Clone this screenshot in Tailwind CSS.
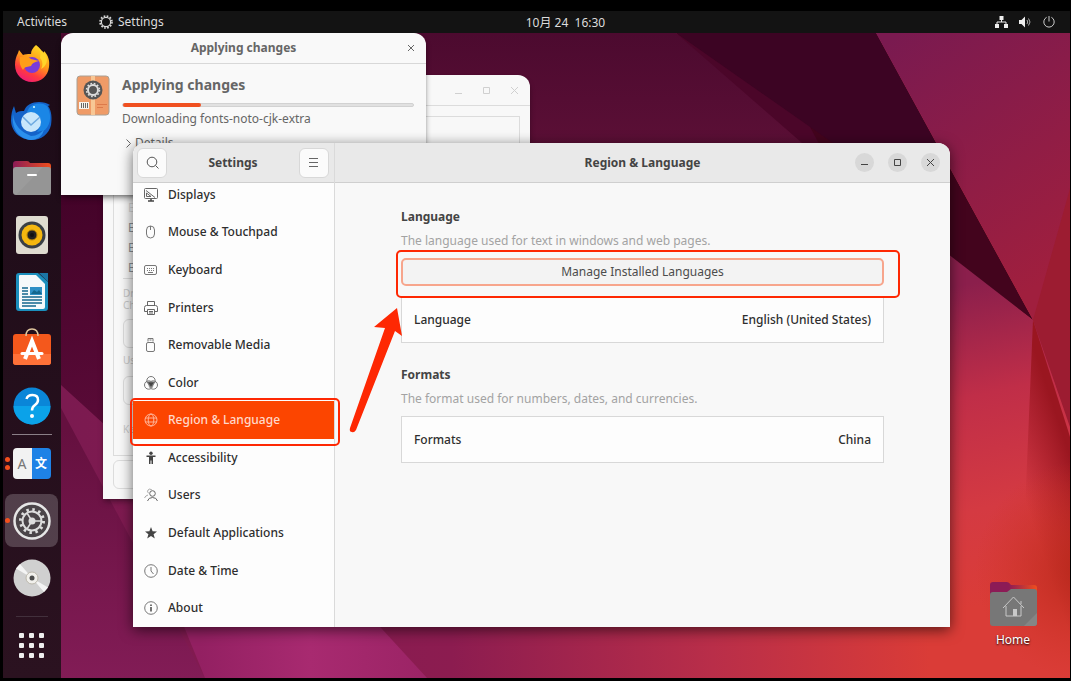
<!DOCTYPE html>
<html lang="en">
<head>
    <meta charset="UTF-8">
    <meta name="viewport" content="width=device-width, initial-scale=1.0">
    <title>Settings | Region &amp; Language</title>
    <script src="https://cdn.jsdelivr.net/npm/@tailwindcss/browser@4"></script>
</head>
<body class="bg-black font-['Noto_Sans','Noto_Sans_CJK_SC',sans-serif] text-xs">
<div class="min-h-screen flex flex-col pt-[11px] pl-[3px] pr-px pb-[3px]">

    <!-- Top bar -->
    <header class="h-[22px] flex items-center bg-[#131313] text-[#dcdcdc]">
        <nav class="w-[58px] shrink-0 flex items-center pl-[14px] whitespace-nowrap">
            <button type="button">Activities</button>
            <button type="button" class="ml-8 flex items-center gap-[5px]">
                <svg class="w-[14px] h-[14px]" viewBox="0 0 14 14" fill="none" stroke="#dcdcdc">
                    <circle cx="7" cy="7" r="4.6" stroke-width="1.2"/>
                    <circle cx="7" cy="7" r="6" stroke-width="1.6" stroke-dasharray="1.7 1.44"/>
                </svg>
                Settings
            </button>
        </nav>
        <div class="flex-1 grid grid-cols-[1fr_auto_1fr] items-center">
            <time class="col-start-2 pt-[2px] whitespace-pre">10月 24  16:30</time>
            <div class="flex justify-end items-center gap-[11px] pr-[15px]">
                <svg class="w-[13px] h-[12px]" viewBox="0 0 13 12" fill="#eee">
                    <path d="M4.5 0h4v4h-4zM0 8h4v4H0zM9 8h4v4H9z"/>
                    <path d="M6.500 4v2M2 8V6h9v2" fill="none" stroke="#eee"/>
                </svg>
                <svg class="w-[13px] h-[12px]" viewBox="0 0 13 12">
                    <path d="M0 4h2.500L6 .5v11L2.500 8H0z" fill="#eee"/>
                    <path d="M8 4q1.500 2 0 4M9.500 2.500q3 3.500 0 7" fill="none" stroke="#aaa"/>
                </svg>
                <svg class="w-[12px] h-[12px]" viewBox="0 0 12 12" fill="none" stroke="#ccc">
                    <path d="M3.600 1.300a5.200 5.200 0 1 0 4.800 0M6 0v5.500"/>
                </svg>
            </div>
        </div>
    </header>

    <div class="relative flex-1 flex overflow-hidden">
        <!-- Wallpaper -->
        <svg class="absolute inset-0 w-full h-full" viewBox="3 33 1067 645" preserveAspectRatio="none">
            <defs>
                <linearGradient id="base" gradientUnits="userSpaceOnUse" x1="61" y1="660" x2="930" y2="660">
                    <stop offset="0" stop-color="#7b1a50"/>
                    <stop offset=".45" stop-color="#8c1c50"/>
                    <stop offset=".75" stop-color="#b92e49"/>
                    <stop offset="1" stop-color="#da3c37"/>
                </linearGradient>
                <linearGradient id="top" x1="0" y1="0" x2="0" y2="1">
                    <stop offset="0" stop-color="#4c0a2f"/>
                    <stop offset=".7" stop-color="#5e1037"/>
                    <stop offset="1" stop-color="#6e1340"/>
                </linearGradient>
                <linearGradient id="left" gradientUnits="userSpaceOnUse" x1="61" y1="200" x2="110" y2="500">
                    <stop offset="0" stop-color="#440329"/>
                    <stop offset="1" stop-color="#610d3c"/>
                </linearGradient>
                <linearGradient id="strip" gradientUnits="userSpaceOnUse" x1="61" y1="430" x2="61" y2="678">
                    <stop offset="0" stop-color="#65103f"/>
                    <stop offset="1" stop-color="#821c56"/>
                </linearGradient>
                <linearGradient id="right" gradientUnits="userSpaceOnUse" x1="900" y1="33" x2="1060" y2="270">
                    <stop offset="0" stop-color="#7a1a50"/>
                    <stop offset="1" stop-color="#a01f3e"/>
                </linearGradient>
                <linearGradient id="low" gradientUnits="userSpaceOnUse" x1="940" y1="290" x2="1010" y2="600">
                    <stop offset="0" stop-color="#8b1f4c"/>
                    <stop offset=".35" stop-color="#c02e48"/>
                    <stop offset=".7" stop-color="#d43a42"/>
                    <stop offset="1" stop-color="#da3c37"/>
                </linearGradient>
                <linearGradient id="edge" gradientUnits="userSpaceOnUse" x1="1018" y1="480" x2="1072" y2="462">
                    <stop offset="0" stop-color="#a51b22" stop-opacity="0"/>
                    <stop offset="1" stop-color="#9a1620"/>
                </linearGradient>
                <radialGradient id="corner" gradientUnits="userSpaceOnUse" cx="1085" cy="570" r="110">
                    <stop offset="0" stop-color="#b8281c"/>
                    <stop offset="1" stop-color="#cf3324" stop-opacity="0"/>
                </radialGradient>
                <linearGradient id="magenta" gradientUnits="userSpaceOnUse" x1="200" y1="640" x2="420" y2="640">
                    <stop offset="0" stop-color="#932062"/>
                    <stop offset=".5" stop-color="#a82a70"/>
                    <stop offset="1" stop-color="#9c2466"/>
                </linearGradient>
            </defs>
            <path d="M0 33h1071v650H0z" fill="url(#base)"/>
            <path d="M61 33h615l157 110v80H61z" fill="url(#top)"/>
            <path d="M0 150h140v307L61 385H0z" fill="url(#left)"/>
            <path d="M61 408l144 270H61z" fill="url(#strip)"/>
            <path d="M676 33h200l157 287-200-150z" fill="#4b0629"/>
            <path d="M800 108l76-75 157 287-200-150z" fill="#43041d"/>
            <path d="M676 33h200l60 110H833z" fill="#3c0423"/>
            <path d="M876 33h195v430l-38-143z" fill="url(#right)"/>
            <path d="M930 240l103 80 37 105v253H930z" fill="url(#low)"/>
            <path d="M1033 320l38 120v238h-53z" fill="url(#edge)"/>
            <path d="M930 440h141v238H930z" fill="url(#corner)"/>
            <path d="M1033 320l38-135v245z" fill="#9c1c31"/>
            <path d="M165 580l40 98h222l-90-98z" fill="url(#magenta)"/>
        </svg>

        <!-- Dock -->
        <aside class="relative w-[58px] shrink-0 pt-[2px] pr-px flex flex-col items-center bg-linear-to-b from-[#1c0b17] to-[#2b1220]">
            <button type="button" aria-label="Firefox" class="h-[57px] grid place-items-center">
                <svg class="w-[36px] h-[38px]" viewBox="0 0 36 38">
                    <defs>
                        <linearGradient id="fox" x1=".8" y1="0" x2=".3" y2="1">
                            <stop offset="0" stop-color="#ffe226"/><stop offset=".45" stop-color="#ff9a1a"/><stop offset=".75" stop-color="#ff3b3f"/><stop offset="1" stop-color="#ee1a78"/>
                        </linearGradient>
                    </defs>
                    <path d="M22 0c4 3 6 6 7 9 1-1 1-2 1-3 4 4 6 9 5 16-1 9-8 15-17 15S1 30 1 20c0-5 1-8 3-12l1-3 4 5c2-1 4-1 8-1 0-4 2-6 5-9z" fill="url(#fox)"/>
                    <circle cx="18" cy="20" r="8" fill="#7a3bd8"/>
                    <path d="M6 12c5-1 8-1 11 2l8 2c-4 1-7 2-8 5-3 1-6 0-8 4-3-4-4-8-3-13z" fill="#ff9d18"/>
                    <path d="M22 0c4 4 5 8 4 13 3 3 3 8 1 11 6-3 7-9 5-14-2-3-7-6-10-10z" fill="#ffd52a"/>
                </svg>
            </button>
            <button type="button" aria-label="Thunderbird" class="h-[57px] grid place-items-center">
                <svg class="w-[42px] h-[40px]" viewBox="0 0 42 40">
                    <path d="M3 5l2 7c3-2 5-2 8-2 2-6 8-9 15-9 4 0 8 1 11 3l-2 1c4 5 4 13 3 19-2 9-10 15-19 15C9 39 0 30 0 19 0 14 1 9 3 5z" fill="#1463c9"/>
                    <path d="M18 7C22 2 31 1 36 5c4 7 5 17-2 24l-8 2c6-6 2-17-10-20z" fill="#1a86e6"/>
                    <circle cx="20" cy="21" r="10" fill="#c7e6fb"/>
                    <path d="M12 16l8 8 9-8" fill="none" stroke="#6da9df" stroke-width="1.500"/>
                    <path d="M2 13c1 11 8 18 18 22 6 0 10-3 13-7-1 7-7 11-13 11C9 38 0 29 2 13z" fill="#2b90ec"/>
                    <circle cx="23" cy="6" r="1" fill="#dff"/>
                </svg>
            </button>
            <button type="button" aria-label="Files" class="h-[57px] grid place-items-center">
                <svg class="w-[38px] h-[34px]" viewBox="0 0 38 34">
                    <defs><linearGradient id="tab"><stop offset="0" stop-color="#8c1b56"/><stop offset="1" stop-color="#f04f1d"/></linearGradient></defs>
                    <path d="M0 3q0-3 3-3h11q2 0 3 2h18q3 0 3 3v12H0z" fill="url(#tab)"/>
                    <rect y="6" width="38" height="28" rx="3" fill="#9b9b9b"/>
                    <path d="M3 34L30 6h5q3 0 3 3v22q0 3-3 3z" fill="#8f8f8f" opacity=".5"/>
                    <rect x="14" y="13" width="10" height="2" rx="1" fill="#fff"/>
                </svg>
            </button>
            <button type="button" aria-label="Rhythmbox" class="h-[57px] grid place-items-center">
                <svg class="w-[32px] h-[38px]" viewBox="0 0 32 38">
                    <rect width="32" height="38" rx="3" fill="#dfdbd0"/>
                    <circle cx="16" cy="19" r="13.500" fill="#3a3f45"/>
                    <circle cx="16" cy="19" r="10.500" fill="#f5b70f"/>
                    <circle cx="16" cy="19" r="5" fill="#222" stroke="#b98608"/>
                    <circle cx="16" cy="19" r="2" fill="#111"/>
                </svg>
            </button>
            <button type="button" aria-label="Writer" class="h-[57px] grid place-items-center">
                <svg class="w-[32px] h-[38px]" viewBox="0 0 32 38">
                    <path d="M3 0h19l10 9v26q0 3-3 3H3q-3 0-3-3V3q0-3 3-3z" fill="#1b8fbd"/>
                    <path d="M4 2h16l9 9v23q0 2-2 2H5q-2 0-2-2V3q0-1 1-1z" fill="#f5f9fb"/>
                    <path d="M23 0h9v9z" fill="#1b76a5"/>
                    <path d="M6 15h6M6 18h6M6 21h6M6 24h20M6 27h20M6 30h20M6 33h14" stroke="#13678f" stroke-width="1.500"/>
                    <rect x="14" y="14" width="12" height="8" fill="#2e8fc5"/>
                    <path d="M15 21l3-4 3 2 2-2 3 4z" fill="#13678f"/>
                </svg>
            </button>
            <button type="button" aria-label="Software" class="h-[57px] grid place-items-start">
                <svg class="mt-2 w-[38px] h-[38px]" viewBox="0 0 38 38">
                    <rect y="6" width="38" height="31" rx="3" fill="#f4581c"/>
                    <path d="M0 26h38v8q0 3-3 3H3q-3 0-3-3z" fill="#ff7138"/>
                    <path d="M13 8q0-7 6-7t6 7" fill="none" stroke="#e0c79f" stroke-width="1.500"/>
                    <path d="M12 31l7-18 7 18" fill="none" stroke="#fff" stroke-width="4"/>
                    <path d="M9 25.500h20" stroke="#fff" stroke-width="3" stroke-linecap="round"/>
                </svg>
            </button>
            <button type="button" aria-label="Help" class="h-[57px] grid place-items-center">
                <svg class="w-[38px] h-[38px]" viewBox="0 0 38 38">
                    <circle cx="19" cy="19" r="18.500" fill="#0a86d8"/>
                    <path d="M.5 19a18.500 18.500 0 0 0 37 0z" fill="#0ba2e9"/>
                    <path d="M13.500 12q1-4 6-4 5.500 0 5.500 5 0 3-3 5t-3 5.500" fill="none" stroke="#fff" stroke-width="2.500"/>
                    <circle cx="19" cy="29" r="2" fill="#fff"/>
                </svg>
            </button>
            <hr class="w-10 border-[#8b7f87]">
            <button type="button" aria-label="Language Support" class="relative h-[57px] w-full grid place-items-center">
                <span class="absolute left-[2px] flex flex-col gap-[3px]">
                    <i class="size-[5px] rounded-full bg-[#f4501d]"></i>
                    <i class="size-[5px] rounded-full bg-[#f4501d]"></i>
                </span>
                <span class="w-[38px] h-[31px] flex rounded-[4px] overflow-hidden">
                    <span class="flex-1 bg-[#f2f2f2] text-[#777] text-sm leading-[31px]">A</span>
                    <span class="flex-1 bg-[#1e82e6] text-white font-bold leading-[31px]">文</span>
                </span>
            </button>
            <button type="button" aria-label="Settings" class="relative h-[57px] w-full grid place-items-center">
                <i class="absolute left-[2px] z-10 size-[5px] rounded-full bg-[#f4501d]"></i>
                <span class="size-[53px] rounded-lg bg-white/20 grid place-items-center">
                    <svg class="w-[38px] h-[38px]" viewBox="0 0 38 38" fill="none">
                        <circle cx="19" cy="19" r="17.500" fill="#4b4549" stroke="#e6e6e6" stroke-width="2.500"/>
                        <circle cx="19" cy="19" r="9.500" stroke="#ddd" stroke-width="2"/>
                        <circle cx="19" cy="19" r="11.500" stroke="#ddd" stroke-width="3" stroke-dasharray="2.500 3.520"/>
                        <path d="M19 19h9M19 19l-5-8M19 19l-5 8" stroke="#ddd" stroke-width="1.500"/>
                        <circle cx="19" cy="19" r="3.500" fill="#ddd"/>
                    </svg>
                </span>
            </button>
            <button type="button" aria-label="Disc" class="h-[57px] grid place-items-center">
                <svg class="w-[38px] h-[38px]" viewBox="0 0 38 38">
                    <circle cx="19" cy="19" r="18.500" fill="#d0d0d0"/>
                    <path d="M19 19L3 9.500 7 5zM19 19l16 9.500-4 4.500z" fill="#f4f4f4"/>
                    <circle cx="19" cy="19" r="6" fill="#f1f0ec" stroke="#bcb8ac"/>
                    <circle cx="19" cy="19" r="2.500" fill="#4d4d4d"/>
                </svg>
            </button>
            <hr class="mt-[10px] w-8 border-[#42303c]">
            <button type="button" aria-label="Show Applications" class="mt-4">
                <svg class="w-[26px] h-[26px]" viewBox="0 0 26 26" fill="#eee">
                    <rect width="5" height="5" rx="1"/><rect x="10" width="5" height="5" rx="1"/><rect x="20" width="5" height="5" rx="1"/>
                    <rect y="10" width="5" height="5" rx="1"/><rect x="10" y="10" width="5" height="5" rx="1"/><rect x="20" y="10" width="5" height="5" rx="1"/>
                    <rect y="20" width="5" height="5" rx="1"/><rect x="10" y="20" width="5" height="5" rx="1"/><rect x="20" y="20" width="5" height="5" rx="1"/>
                </svg>
            </button>
        </aside>

        <main class="relative flex-1">
            <!-- Home folder on the desktop -->
            <a href="#" class="absolute right-[27px] bottom-[30px] w-[60px] flex flex-col items-center gap-[6px] text-white">
                <svg class="w-[47px] h-[44px]" viewBox="0 0 47 44">
                    <defs><linearGradient id="tab2"><stop offset=".4" stop-color="#8c1b56"/><stop offset="1" stop-color="#f04f1d"/></linearGradient></defs>
                    <path d="M0 3q0-3 3-3h14q2 0 4 3h23q3 0 3 3v14H0z" fill="url(#tab2)"/>
                    <path d="M0 13q0-3 3-3h14l4-3h23q3 0 3 3v31q0 3-3 3H3q-3 0-3-3z" fill="#777"/>
                    <path d="M34 44L47 31v10q0 3-3 3z" fill="#858585"/>
                    <path d="M13 26l10.500-11L34 26M16 24v10h15V24M31 22v-3" fill="none" stroke="#c9c9c9"/>
                    <path d="M23 27h4v7h-4z" fill="#c9c9c9"/>
                </svg>
                <span class="leading-4 [text-shadow:0_1px_2px_#000]">Home</span>
            </a>

            <!-- Language Support window -->
            <section class="absolute left-[42px] top-[42px] w-[427px] flex flex-col bg-[#f8f8f8] rounded-t-xl text-[#c9c9c9] shadow-md shadow-black/30">
                <div class="h-[31px] flex items-center justify-end gap-[19px] pr-[11px] border-b border-[#dcdcdc]">
                    <button type="button" aria-label="Minimize"><svg class="size-[9px]" viewBox="0 0 9 9" stroke="#d0d0d0"><path d="M1 7.500h7"/></svg></button>
                    <button type="button" aria-label="Maximize"><svg class="size-[9px]" viewBox="0 0 9 9" fill="none" stroke="#d0d0d0"><path d="M1.500 1.500h6v6h-6z"/></svg></button>
                    <button type="button" aria-label="Close"><svg class="size-[9px]" viewBox="0 0 9 9" stroke="#d0d0d0"><path d="M1 1l7 7M8 1l-7 7"/></svg></button>
                </div>
                <div class="h-[340px] m-[10px] mb-1 pl-[9px] border border-[#dcdcdc]">
                    <ul class="pt-[81px] pl-[5px] leading-5 text-[#8d9299]">
                        <li class="text-[#dadada]">E</li>
                        <li>E</li>
                        <li>E</li>
                        <li>E</li>
                    </ul>
                    <p class="border-t border-[#dcdcdc] pt-2 text-[10px] leading-3">Dr<br>Ch</p>
                    <div class="mt-2 h-[29px] rounded-md border border-[#dcdcdc]"></div>
                    <p class="mt-1 text-[10px] leading-4">Us</p>
                    <div class="mt-2 h-[29px] rounded-md border border-[#dcdcdc]"></div>
                    <p class="mt-4 text-[10px] leading-4">Ke</p>
                </div>
                <div class="mx-[10px] mb-[10px] h-[29px] rounded-md border border-[#dcdcdc]"></div>
            </section>

            <!-- Applying changes dialog -->
            <section class="absolute left-0 top-0 w-[365px] h-[162px] bg-[#f9f9f9] rounded-t-xl text-[#666] shadow-md shadow-black/40">
                <div class="h-[31px] grid grid-cols-[1fr_auto_1fr] items-center border-b border-[#d8d8d8]">
                    <h2 class="col-start-2 font-bold">Applying changes</h2>
                    <button type="button" aria-label="Close" class="justify-self-end mr-[11px]">
                        <svg class="size-[8px]" viewBox="0 0 8 8" stroke="#666"><path d="M1 1l6 6M7 1l-6 6"/></svg>
                    </button>
                </div>
                <div class="flex gap-3 pt-[11px] pl-[15px] pr-3">
                    <svg class="w-[34px] h-[41px] shrink-0" viewBox="0 0 34 41">
                        <rect x="1" y="1" width="32" height="39" rx="3" fill="#ef9b67" stroke="#aaa094"/>
                        <path d="M15 1h4v39h-4z" fill="#f7c795"/>
                        <circle cx="17" cy="15" r="9.500" fill="#555"/>
                        <circle cx="17" cy="15" r="5" fill="none" stroke="#ddd" stroke-width="2"/>
                        <circle cx="17" cy="15" r="6.500" fill="none" stroke="#ddd" stroke-width="1.500" stroke-dasharray="1.700 1.700"/>
                        <path d="M3 27h10v7H3z" fill="#f7f2ed"/>
                        <path d="M5.500 28v5M7.500 28v5M9.500 28v5M11.500 28v5" stroke="#666"/>
                        <path d="M21 29.500h10M21 32.500h6" stroke="#dd7a4a"/>
                    </svg>
                    <div class="flex-1">
                        <h3 class="text-sm leading-5 font-bold">Applying changes</h3>
                        <div class="mt-2 h-[4px] rounded-full bg-[#e1e1e1] border border-[#d2d2d2]">
                            <div class="-mt-px h-[4px] w-[27%] rounded-full bg-[#f05020]"></div>
                        </div>
                        <p class="mt-[2px] leading-5">Downloading fonts-noto-cjk-extra</p>
                        <button type="button" class="mt-1 ml-1 flex items-center gap-1 leading-5">
                            <svg class="w-[5px] h-[9px]" viewBox="0 0 5 9" fill="none" stroke="#666"><path d="M.5.5l4 4-4 4"/></svg>
                            Details
                        </button>
                    </div>
                </div>
            </section>

            <!-- Settings window -->
            <section class="absolute left-[72px] right-[120px] top-[110px] shadow-[0_3px_14px_rgba(0,0,0,0.6)] rounded-t-xl">
                <div class="flex rounded-t-xl overflow-hidden text-[#2e2e2e]">
                    <div class="w-[201px] shrink-0 bg-[#fdfdfd]">
                        <div class="h-10 flex items-center justify-between pl-1 pr-[5px] bg-[#e9e9e9] border-b border-[#cfcfcf]">
                            <button type="button" aria-label="Search" class="size-[30px] grid place-items-center bg-[#fbfbfb] rounded-md border border-[#d8d8d8]">
                                <svg class="size-[13px]" viewBox="0 0 13 13" fill="none" stroke="#555"><circle cx="6" cy="6" r="4.800"/><path d="M9.500 9.500l3 3"/></svg>
                            </button>
                            <h1 class="font-bold text-[#444]">Settings</h1>
                            <button type="button" aria-label="Menu" class="size-[30px] grid place-items-center bg-[#fbfbfb] rounded-md border border-[#d8d8d8]">
                                <svg class="w-[9px] h-[9px]" viewBox="0 0 9 9" stroke="#666"><path d="M0 .5h9M0 4.500h9M0 8.500h9"/></svg>
                            </button>
                        </div>
                        <nav class="h-[444px] flex flex-col justify-end overflow-hidden font-medium">
                            <ul class="h-[451px] shrink-0 flex flex-col *:flex-1 *:flex *:items-center *:px-[11px] [&_a]:flex [&_a]:items-center [&_a]:gap-[10px] [&_svg]:size-[14px]">
                                <li><a href="#"><svg viewBox="0 0 14 14" fill="none" stroke="#666"><path d="M.5 1.500q0-1 1-1h11q1 0 1 1v8q0 1-1 1h-11q-1 0-1-1zM2 2.500l9 7M2.500 5v3.500H7z"/><path d="M4 13h6M7 11v2" stroke="#444" stroke-width="1.500"/></svg>Displays</a></li>
                                <li><a href="#"><svg viewBox="0 0 14 14" fill="none" stroke="#777"><rect x="2.500" y="1" width="8" height="12" rx="4"/><path d="M6.500 1v4"/></svg>Mouse &amp; Touchpad</a></li>
                                <li><a href="#"><svg viewBox="0 0 14 14" fill="none" stroke="#777"><rect x=".5" y="2.500" width="12" height="9" rx="1.500"/><path d="M3 5.500h8M3 7.500h8" stroke-dasharray="1 1"/><path d="M4 9.500h5"/></svg>Keyboard</a></li>
                                <li><a href="#"><svg viewBox="0 0 14 14" fill="none" stroke="#666"><path d="M3.500 4.500v-4h7v4M3.500 10.500h-3v-4q0-2 2-2h9q2 0 2 2v4h-3M3.500 8.500h7v5h-7zM5 10.500h4M5 12h4"/></svg>Printers</a></li>
                                <li><a href="#"><svg viewBox="0 0 14 14" fill="none" stroke="#777"><rect x="2.500" y="4.500" width="8" height="9" rx="1.500"/><path d="M4 3.500v-3h5v3M5.500 2h2"/></svg>Removable Media</a></li>
                                <li><a href="#"><svg viewBox="0 0 14 14" fill="none" stroke="#777"><circle cx="7" cy="4.700" r="4.200"/><circle cx="4.700" cy="9" r="4.200"/><circle cx="9.300" cy="9" r="4.200"/><path d="M3.500 6h7L7 11.500z" fill="#444"/></svg>Color</a></li>
                                <li class="bg-[#fc4500] text-[#ffd9cb]"><a href="#"><svg viewBox="0 0 14 14" fill="none" stroke="#ffb599"><circle cx="7" cy="7" r="6"/><ellipse cx="7" cy="7" rx="2.800" ry="6"/><path d="M1 5h12M1 9h12"/></svg>Region &amp; Language</a></li>
                                <li><a href="#"><svg viewBox="0 0 14 14" fill="#444"><circle cx="7" cy="2.300" r="1.700"/><path d="M2.500 4.500h9V6H9v7H7.500V9.500h-1V13H5V6H2.500z"/></svg>Accessibility</a></li>
                                <li><a href="#"><svg viewBox="0 0 14 14" fill="none" stroke="#666"><circle cx="8.500" cy="5.500" r="2.800"/><path d="M3.500 13q1-3.500 5-3.500t5 3.500"/><path d="M5 5.500Q2.500 4 4 2t4 0M.5 10q1-2.500 3.500-3" stroke="#aaa"/></svg>Users</a></li>
                                <li><a href="#"><svg viewBox="0 0 14 14" fill="#444"><path d="M7 1l1.600 4.200 4.400.2-3.400 2.800 1.200 4.300L7 10.100l-3.800 2.400 1.200-4.300L1 5.400l4.400-.2z"/></svg>Default Applications</a></li>
                                <li><a href="#"><svg viewBox="0 0 14 14" fill="none" stroke="#777"><circle cx="7" cy="7" r="6.300"/><path d="M7 3v4l2.500 3"/></svg>Date &amp; Time</a></li>
                                <li><a href="#"><svg viewBox="0 0 14 14" fill="none" stroke="#777"><circle cx="7" cy="7" r="6.300"/><path d="M7 6v4.500M7 3.500V5" stroke="#444" stroke-width="1.500"/></svg>About</a></li>
                            </ul>
                        </nav>
                    </div>

                    <div class="flex-1 bg-[#f8f8f8] border-l border-[#dadada]">
                        <div class="h-10 grid grid-cols-[1fr_auto_1fr] items-center px-[10px] bg-[#e9e9e9] border-b border-[#cfcfcf]">
                            <h2 class="col-start-2 font-bold text-[#444]">Region &amp; Language</h2>
                            <div class="flex justify-end gap-[14px] *:size-[19px] *:rounded-full *:bg-[#d8d8d8] *:grid *:place-items-center">
                                <button type="button" aria-label="Minimize"><svg class="size-[9px]" viewBox="0 0 9 9" stroke="#444"><path d="M1 6.500h7"/></svg></button>
                                <button type="button" aria-label="Maximize"><svg class="size-[9px]" viewBox="0 0 9 9" fill="none" stroke="#444"><path d="M1.500 1.500h6v6h-6z"/></svg></button>
                                <button type="button" aria-label="Close"><svg class="size-[9px]" viewBox="0 0 9 9" stroke="#444"><path d="M1 1l7 7M8 1l-7 7"/></svg></button>
                            </div>
                        </div>
                        <div class="pt-6 px-[66px] leading-5">
                            <h3 class="font-bold text-[#444]">Language</h3>
                            <p class="mt-1 text-[#a3a3a3]">The language used for text in windows and web pages.</p>
                            <div class="relative mt-[7px]">
                                <button type="button" class="w-full h-7 rounded-[5px] border-2 border-[#f7a58c] bg-[#f3f3f3] text-[#4c4c4c] leading-5">Manage Installed Languages</button>
                                <span class="absolute z-10 -left-[5px] -right-4 -top-2 -bottom-3 rounded-[5px] border-2 border-[#fe2803] pointer-events-none"></span>
                            </div>
                            <button type="button" class="mt-[10px] w-full h-[47px] px-3 flex items-center justify-between bg-[#fdfdfd] border border-[#d8d8d8] font-medium">
                                <span>Language</span>
                                <span>English (United States)</span>
                            </button>
                            <h3 class="mt-[22px] font-bold text-[#444]">Formats</h3>
                            <p class="mt-1 text-[#a3a3a3]">The format used for numbers, dates, and currencies.</p>
                            <button type="button" class="mt-[7px] w-full h-[47px] px-3 flex items-center justify-between bg-[#fdfdfd] border border-[#d8d8d8] font-medium">
                                <span>Formats</span>
                                <span>China</span>
                            </button>
                        </div>
                    </div>
                </div>

                <!-- Highlight box and arrow -->
                <span class="absolute -left-[3px] top-[255px] w-[210px] h-[48px] rounded-[5px] border-2 border-[#fe2803] pointer-events-none"></span>
                <svg class="absolute left-[216px] top-[164px] w-[56px] h-[126px] pointer-events-none" viewBox="349 307 56 126" fill="#fe2803">
                    <path d="M397 308L374 327l11 1L350 428q-1 4 2 4 2 1 4-2L395 331l7 5z"/>
                </svg>
            </section>
        </main>
    </div>
</div>
</body>
</html>
